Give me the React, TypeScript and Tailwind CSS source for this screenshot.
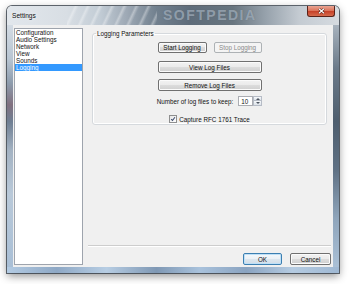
import React from 'react';
import clsx from 'clsx';

const pages = ['Configuration', 'Audio Settings', 'Network', 'View', 'Sounds', 'Logging'];

function WinButton({
  label,
  className,
  disabled,
  isDefault,
}: {
  label: string;
  className?: string;
  disabled?: boolean;
  isDefault?: boolean;
}) {
  return (
    <div
      className={clsx(
        'flex items-center justify-center rounded-[2px] border whitespace-nowrap',
        disabled
          ? 'border-[#adb2b5] bg-[#f4f4f4] text-[#8a8a8a]'
          : isDefault
            ? 'border-[#3c7fb1] bg-[linear-gradient(#f4f8fb_0%,#ebf1f6_50%,#dde7ef_50%,#d2dde7_100%)] shadow-[inset_0_0_0_1px_#bfe0f7]'
            : 'border-[#707070] bg-[linear-gradient(#f2f2f2_0%,#ebebeb_50%,#dddddd_50%,#cfcfcf_100%)] shadow-[inset_0_0_0_1px_#fbfbfb]',
        className
      )}
    >
      {label}
    </div>
  );
}

export default function App() {
  return (
    <div className="w-[350px] h-[284px] bg-white overflow-hidden font-['Liberation_Sans',Arial,sans-serif] text-[6.3px] leading-[7px] text-[#111]">
      <div className="ml-[7px] mt-[6px] w-[332px] h-[267px] flex flex-col rounded-t-[5px] overflow-hidden shadow-[0_0_0_1px_rgba(45,55,66,0.75),0_3px_9px_rgba(0,0,0,0.45)]">
        {/* title bar */}
        <div className="relative h-[19px] flex items-start bg-[linear-gradient(to_right,#e2e7ec_0%,#d8dee4_18%,#c2ccd5_28%,#9ea9b5_36%,#71808e_45%,#5e6c7a_55%,#68757f_68%,#97a2ac_78%,#c4cbd2_88%,#d6dbe0_100%)]">
          <div className="absolute left-[60px] top-0 h-[19px] w-[90px] bg-[repeating-linear-gradient(115deg,rgba(255,255,255,0)_0px,rgba(255,255,255,0)_6px,rgba(255,255,255,0.35)_8px,rgba(255,255,255,0)_11px)]" />
          <span className="absolute left-[156px] top-[1px] text-[14px] leading-[16px] font-bold tracking-[1.5px] text-[rgba(190,202,214,0.55)] [text-shadow:0_0_1px_rgba(80,95,110,0.6)]">
            SOFTPEDIA
          </span>
          <span className="relative mt-[6px] ml-[5px] text-[6.6px] leading-[7px] [text-shadow:0_0_4px_#ffffff]">
            Settings
          </span>
          <div className="relative ml-auto mr-[4px] w-[28px] h-[11px] rounded-b-[3px] border border-t-0 border-[#5a2219] bg-[linear-gradient(#eaa493_0%,#dc765d_45%,#c7432a_55%,#d66a4c_100%)] flex items-center justify-center">
            <svg width="7" height="6" viewBox="0 0 7 6">
              <path d="M1 0.8 L6 5.2 M6 0.8 L1 5.2" stroke="#4a1a12" strokeWidth="2.2" />
              <path d="M1 0.8 L6 5.2 M6 0.8 L1 5.2" stroke="#ffffff" strokeWidth="1.2" />
            </svg>
          </div>
        </div>

        {/* frame sides + client */}
        <div className="flex h-[242px]">
          <div className="w-[6px] bg-[linear-gradient(to_bottom,#d3dbe3_0%,#b8c5d2_14%,#8d9cad_24%,#80707f_33%,#6f7f93_40%,#a4b3c3_52%,#b9c9d9_70%,#a9bfd6_100%)]" />
          <div className="w-[320px] bg-[#f0f0f0] flex">
            {/* page list */}
            <div className="ml-[1px] mt-[3px] w-[69px] h-[237px] border border-[#9ea4ad] bg-white">
              {pages.map((p) => (
                <div
                  key={p}
                  className={clsx(
                    'h-[7px] pl-[1px] whitespace-nowrap',
                    p === 'Logging' && 'bg-[#3399ff] text-white'
                  )}
                >
                  {p}
                </div>
              ))}
            </div>

            {/* right side */}
            <div className="ml-[5px] w-[243px] flex flex-col">
              <fieldset className="ml-[4px] mt-[5px] w-[235px] border border-[#d5d9dd] rounded-[3px] flex flex-col items-center pb-[1px] shadow-[inset_0_0_0_1px_#ffffff]">
                <legend className="ml-[3px] px-[1px] leading-[7px]">Logging Parameters</legend>
                <div className="mt-[5px] flex gap-[7px]">
                  <WinButton label="Start Logging" className="w-[49px] h-[11px]" />
                  <WinButton label="Stop Logging" className="w-[48px] h-[11px]" disabled />
                </div>
                <WinButton label="View Log Files" className="mt-[8px] w-[104px] h-[12px]" />
                <WinButton label="Remove Log Files" className="mt-[6px] w-[104px] h-[12px]" />
                <div className="mt-[5px] h-[10px] flex items-center">
                  <span className="whitespace-nowrap">Number of log files to keep:</span>
                  <div className="ml-[5px] w-[15px] h-[10px] border border-[#abadb3] bg-white pl-[2px] flex items-center">
                    10
                  </div>
                  <div className="w-[9px] h-[10px] flex flex-col">
                    <div className="h-[5px] border border-[#b6bcc6] bg-[linear-gradient(#f6f8fa,#dde3ea)] flex items-center justify-center">
                      <svg width="4" height="2" viewBox="0 0 4 2">
                        <path d="M0 2 L2 0 L4 2 Z" fill="#4d5560" />
                      </svg>
                    </div>
                    <div className="h-[5px] border border-t-0 border-[#b6bcc6] bg-[linear-gradient(#f6f8fa,#dde3ea)] flex items-center justify-center">
                      <svg width="4" height="2" viewBox="0 0 4 2">
                        <path d="M0 0 L2 2 L4 0 Z" fill="#4d5560" />
                      </svg>
                    </div>
                  </div>
                </div>
                <div className="mt-[9px] h-[8px] flex items-center">
                  <div className="w-[8px] h-[8px] border border-[#8e8f8f] bg-[linear-gradient(135deg,#e6e6e6,#ffffff)] flex items-center justify-center">
                    <svg width="6" height="6" viewBox="0 0 6 6">
                      <path d="M1.2 3.2 L2.5 4.5 L4.9 1.2" fill="none" stroke="#3f4f72" strokeWidth="1.1" />
                    </svg>
                  </div>
                  <span className="ml-[2px] whitespace-nowrap">Capture RFC 1761 Trace</span>
                </div>
              </fieldset>

              <div className="flex-1" />
              <div className="h-[2px] border-t border-[#cdcdcd] border-b border-b-white" />
              <div className="mt-[6px] mb-[2px] flex justify-end gap-[8px]">
                <WinButton label="OK" className="w-[39px] h-[12px]" isDefault />
                <WinButton label="Cancel" className="w-[41px] h-[12px]" />
              </div>
            </div>
          </div>
          <div className="w-[6px] bg-[linear-gradient(to_bottom,#a7b2bd_0%,#6b7a89_18%,#4e5e6e_40%,#5f7184_60%,#8fa5bb_80%,#aac0d6_100%)]" />
        </div>

        {/* bottom frame */}
        <div className="flex-1 bg-[linear-gradient(to_right,#b3cbe3_0%,#8ea8c5_15%,#b7cde3_30%,#7f98b4_45%,#a9c2dc_58%,#8aa3c0_72%,#b5cbe1_86%,#9fb8d3_100%)]" />
      </div>
    </div>
  );
}
